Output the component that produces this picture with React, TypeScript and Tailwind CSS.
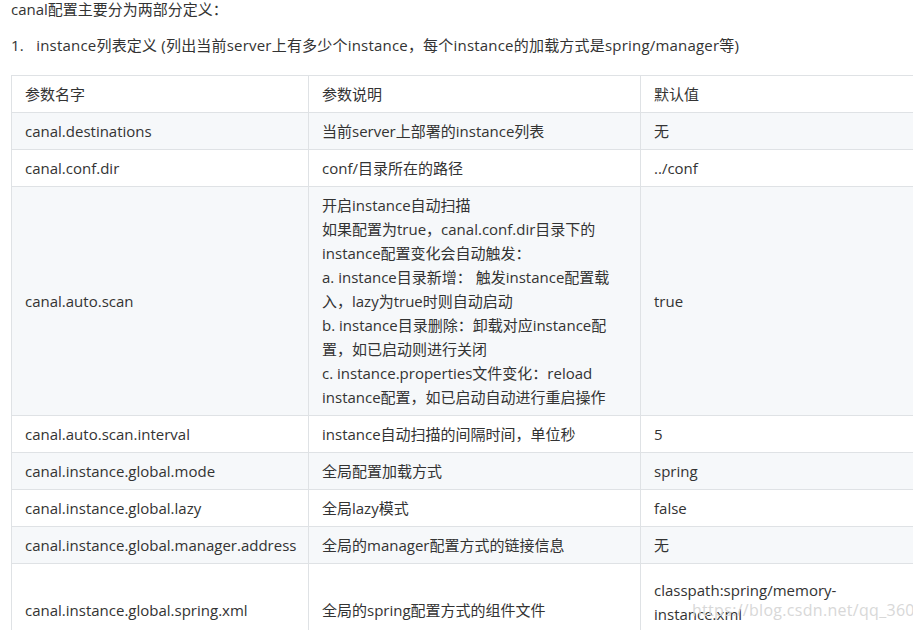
export default function App() {
  const rows: [string, React.ReactNode, React.ReactNode][] = [
    ["canal.destinations", "当前server上部署的instance列表", "无"],
    ["canal.conf.dir", "conf/目录所在的路径", "../conf"],
    [
      "canal.auto.scan",
      <>
        开启instance自动扫描
        <br />
        如果配置为true，canal.conf.dir目录下的instance配置变化会自动触发：
        <br />
        a. instance目录新增： 触发instance配置载入，lazy为true时则自动启动
        <br />
        b. instance目录删除：卸载对应instance配置，如已启动则进行关闭
        <br />
        c. instance.properties文件变化：reload instance配置，如已启动自动进行重启操作
      </>,
      "true",
    ],
    ["canal.auto.scan.interval", "instance自动扫描的间隔时间，单位秒", "5"],
    ["canal.instance.global.mode", "全局配置加载方式", "spring"],
    ["canal.instance.global.lazy", "全局lazy模式", "false"],
    ["canal.instance.global.manager.address", "全局的manager配置方式的链接信息", "无"],
    [
      "canal.instance.global.spring.xml",
      "全局的spring配置方式的组件文件",
      <>
        classpath:spring/memory-instance.xml
        <br />
        (spring目录相对于canal.conf.dir)
      </>,
    ],
  ];
  return (
    <div
      className="w-[913px] h-[630px] overflow-hidden bg-white text-[#333] text-[15px] leading-[24px] relative"
      style={{ fontFamily: '"Open Sans","Noto Sans CJK SC",sans-serif' }}
    >
      <p className="pl-[11px] pt-[1px] mt-[-4px]">canal配置主要分为两部分定义：</p>
      <p className="pl-[11px] mt-[12px] tracking-[0.2px]">
        1.&nbsp;&nbsp;&nbsp;instance列表定义 (列出当前server上有多少个instance，每个instance的加载方式是spring/manager等)
      </p>
      <table className="ml-[11px] mt-[18px] border-collapse table-fixed w-[960px]">
        <colgroup>
          <col className="w-[297px]" />
          <col className="w-[332px]" />
          <col className="w-[331px]" />
        </colgroup>
        <thead>
          <tr className="h-[37px]">
            <th className="border border-[#dfe2e5] px-[13px] text-left font-normal">参数名字</th>
            <th className="border border-[#dfe2e5] px-[13px] text-left font-normal">参数说明</th>
            <th className="border border-[#dfe2e5] px-[13px] text-left font-normal">默认值</th>
          </tr>
        </thead>
        <tbody>
          {rows.map((r, i) => (
            <tr key={i} className={i % 2 === 0 ? "bg-[#f6f8fa] h-[37px]" : "bg-white h-[37px]"}>
              <td className="border border-[#dfe2e5] px-[13px] py-[6px] align-middle">{r[0]}</td>
              <td className="border border-[#dfe2e5] px-[13px] py-[6px] align-middle">{r[1]}</td>
              <td className="border border-[#dfe2e5] px-[13px] py-[6px] align-middle">
                {i === 7 ? <div className="w-[225px] pt-[8px]">{r[2]}</div> : r[2]}
              </td>
            </tr>
          ))}
        </tbody>
      </table>
      <div className="absolute left-[692px] top-[598px] text-[16px] text-[#d8d8d8] tracking-[0.3px]">
        https://blog.csdn.net/qq_36016356
      </div>
    </div>
  );
}
